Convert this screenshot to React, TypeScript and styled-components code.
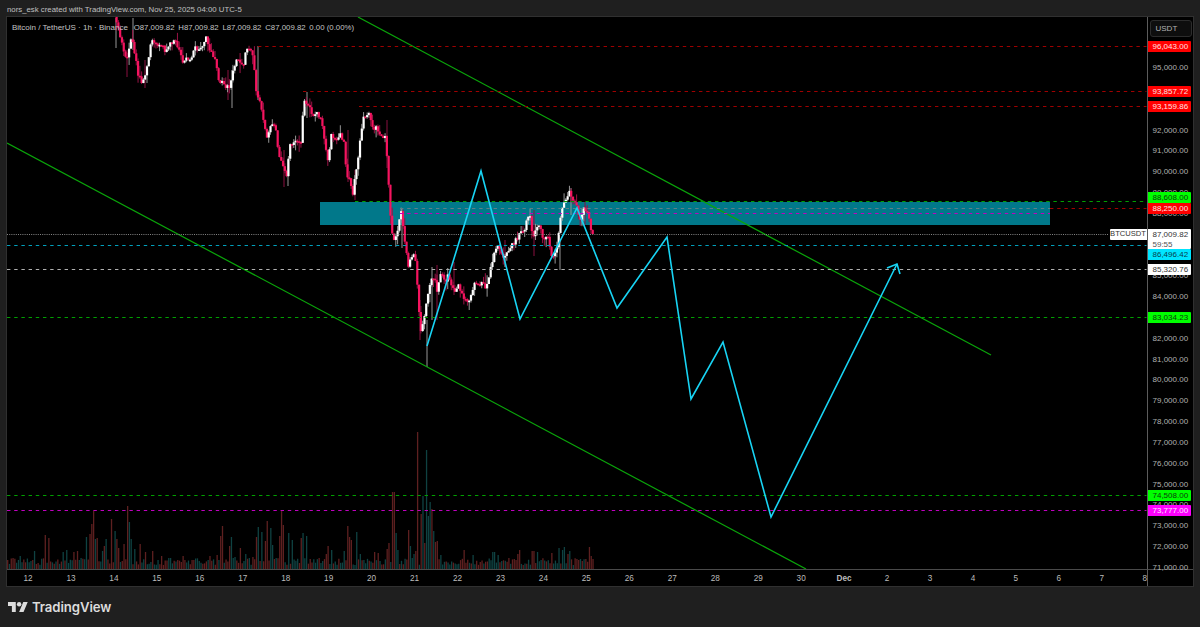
import React from 'react';
import styled, { createGlobalStyle } from 'styled-components';

const GlobalStyle = createGlobalStyle`
  html, body {
    margin: 0;
    padding: 0;
    background: #1f1f1f;
  }
`;

const FONT = `'Liberation Sans', Arial, sans-serif`;

const Page = styled.div`
  width: 1200px;
  height: 627px;
  overflow: hidden;
  box-sizing: border-box;
  padding: 0 6px;
  display: flex;
  flex-direction: column;
  font-family: ${FONT};
`;

const Caption = styled.div`
  height: 16px;
  line-height: 19px;
  padding-left: 1px;
  font-size: 7.8px;
  color: #c0c0c0;
  white-space: nowrap;
`;

const Frame = styled.div`
  height: 571px;
  box-sizing: border-box;
  border: 1px solid #303030;
  background: #000;
  display: grid;
  grid-template-columns: 1139.5px 1fr;
  grid-template-rows: 552px 1fr;
  overflow: hidden;
`;

const Plot = styled.div`
  position: relative;
  overflow: hidden;
`;

const PlotSvg = styled.svg`
  display: block;
  width: 100%;
  height: 100%;
`;

const Legend = styled.div`
  position: absolute;
  top: 5px;
  left: 5px;
  display: flex;
  gap: 3.8px;
  font-size: 7.8px;
  line-height: 11px;
  color: #c4c4c4;
  white-space: nowrap;
`;

const LegendTitle = styled.span`
  font-size: 8px;
  margin-right: 2px;
`;

const PriceAxis = styled.div`
  position: relative;
  border-left: 1px solid #5c5c5c;
`;

const CurrencyButton = styled.div`
  position: absolute;
  top: 3px;
  left: 2px;
  width: 42px;
  height: 17px;
  box-sizing: border-box;
  border: 1px solid #2c2c2c;
  border-radius: 3px;
  background: #0e0e0e;
  padding-left: 5px;
  font-size: 8px;
  line-height: 15px;
  color: #b4b4b4;
`;

const Tick = styled.div`
  position: absolute;
  left: 5px;
  font-size: 8px;
  line-height: 10px;
  color: #b0b0b0;
  transform: translateY(-50%);
`;

const PriceTag = styled.div<{ $bg: string; $fg: string }>`
  position: absolute;
  left: 0;
  width: 43px;
  height: 11px;
  box-sizing: border-box;
  padding-left: 5px;
  border-radius: 0 1px 1px 0;
  background: ${p => p.$bg};
  color: ${p => p.$fg};
  font-size: 8px;
  line-height: 11px;
`;

const LastPrice = styled(PriceTag)`
  height: 20px;
  line-height: 10px;
  padding-top: 0.5px;
`;

const Countdown = styled.div`
  color: #555;
`;

const SymbolTag = styled.div`
  position: absolute;
  top: 0;
  right: 100%;
  width: 37px;
  height: 10.5px;
  margin-right: 1px;
  border-radius: 1px 0 0 1px;
  background: #fff;
  color: #333;
  font-size: 7.6px;
  line-height: 10.5px;
  text-align: center;
`;

const TimeAxis = styled.div`
  grid-column: 1;
  grid-row: 2;
  border-top: 1px solid #4a4a4a;
  display: grid;
  grid-template-columns: repeat(27, 42.96px);
  margin-left: -0.5px;
  position: relative;
  z-index: 1;
`;

const TimeLabel = styled.div<{ $month?: boolean }>`
  text-align: center;
  font-size: 8.2px;
  line-height: 17px;
  font-weight: ${p => (p.$month ? 700 : 400)};
  color: #bcbcbc;
`;

const AxisCorner = styled.div`
  grid-column: 2;
  grid-row: 2;
  border-top: 1px solid #4a4a4a;
  border-left: 1px solid #5c5c5c;
`;

const Footer = styled.div`
  flex: 1;
  display: flex;
  align-items: center;
  gap: 4px;
  padding: 0 0 0 2px;
`;

const LogoMark = styled.svg`
  width: 20px;
  height: 10px;
  fill: #dcdcdc;
`;

const LogoText = styled.span`
  font-family: Inter, ${FONT};
  font-size: 13.2px;
  font-weight: 600;
  letter-spacing: -0.1px;
  color: #dcdcdc;
`;

const STEP = 1.79;

const rng = (seed: number) => {
  let s = seed;
  return () => {
    s = (s * 16807) % 2147483647;
    return s / 2147483647;
  };
};

// candle midline, traced from the chart (page coords)
const PATH: [number, number][] = [
  [113, 5], [118, 20], [123, 40], [127, 58], [130, 55], [133, 35], [136, 50], [140, 75], [143, 82], [147, 75], [152, 52], [153, 38],
  [158, 43], [163, 45], [168, 53], [172, 42], [178, 43], [182, 55], [185, 63], [188, 55], [193, 62], [196, 48], [203, 48], [208, 35],
  [212, 52], [217, 58], [220, 78], [228, 87], [232, 85], [238, 58], [241, 62], [245, 65], [248, 48], [255, 55], [258, 92], [263, 108],
  [268, 137], [272, 127], [277, 125], [280, 153], [286, 168], [288, 178], [292, 145], [297, 140], [303, 143], [305, 108], [307, 100],
  [310, 105], [316, 118], [318, 112], [323, 118], [327, 145], [330, 162], [333, 135], [338, 143], [342, 135], [346, 143], [348, 173],
  [352, 182], [355, 197], [357, 175], [360, 160], [362, 140], [365, 118], [368, 120], [371, 110], [375, 130], [378, 128], [383, 135],
  [387, 137], [390, 173], [392, 215], [395, 245], [400, 228], [403, 210], [407, 243], [410, 267], [415, 252], [418, 265], [420, 298],
  [422, 332], [425, 323], [430, 295], [433, 278], [437, 278], [438, 295], [443, 272], [447, 283], [450, 273], [453, 285], [458, 292],
  [460, 283], [467, 302], [473, 297], [477, 283], [483, 283], [488, 288], [491, 275], [495, 257], [499, 244], [505, 260], [512, 247],
  [520, 237], [527, 227], [531, 213], [535, 238], [540, 223], [545, 238], [550, 237], [553, 257], [558, 250], [563, 213], [567, 200],
  [571, 191], [577, 203], [582, 220], [585, 207], [590, 213], [593, 234],
];

const midY = (x: number) => {
  for (let i = 1; i < PATH.length; i++) {
    if (x <= PATH[i][0]) {
      const [x0, y0] = PATH[i - 1];
      const [x1, y1] = PATH[i];
      return y0 + ((y1 - y0) * (x - x0)) / (x1 - x0);
    }
  }
  return PATH[PATH.length - 1][1];
};

const buildCandles = () => {
  const rand = rng(4711);
  const out: { x: number; open: number; close: number; hi: number; lo: number }[] = [];
  let open = midY(113);
  for (let x = 113; x < 593.5; x += STEP) {
    const close = x + STEP >= 593 ? 234 : midY(x + STEP) + (rand() - 0.5) * 5;
    const hi = Math.min(open, close) - rand() * rand() * 11;
    const lo = Math.max(open, close) + rand() * rand() * 11;
    out.push({ x, open, close, hi, lo });
    open = close;
  }
  return out;
};

const CANDLES = buildCandles();

// long wicks that stand out [x, top, bottom, up]
const WICKS: [number, number, number, boolean][] = [
  [116, 18, 48, true], [133, 18, 50, true], [127, 50, 77, false], [145, 60, 88, false], [232, 70, 108, true], [228, 70, 100, false],
  [258, 46, 100, true], [284, 150, 187, false], [288, 160, 186, true], [307, 92, 118, true], [348, 130, 182, false], [355, 170, 200, false],
  [387, 120, 168, false], [402, 208, 248, true], [420, 300, 340, false], [427, 320, 367, true], [432, 267, 320, true], [437, 265, 320, false],
  [505, 240, 267, false], [534, 210, 256, false], [560, 240, 270, true], [571, 188, 215, true], [585, 202, 225, false], [454, 262, 295, false],
];

// [x, height, up] picked off the chart, the rest of the pane is low noise
const VOLUME_PEAKS: [number, number, boolean][] = [
  [13, 11, false], [21, 13, true], [35, 18, true], [46, 34, false], [48, 31, false], [63, 17, true], [67, 19, true], [74, 17, false], [78, 18, false],
  [87, 32, true], [90, 35, false], [92, 45, false], [94, 58, false], [96, 30, true], [98, 31, false], [102, 18, true], [104, 23, false], [107, 30, true],
  [112, 50, false], [115, 38, true], [117, 30, false], [119, 21, false], [124, 25, false], [127, 63, false], [129, 47, true], [132, 30, true], [134, 20, true],
  [141, 25, false], [146, 17, false], [153, 18, false], [162, 13, false], [170, 11, true], [183, 13, false], [193, 9, false], [210, 13, false], [217, 14, false],
  [220, 33, false], [223, 43, false], [229, 23, false], [232, 32, true], [235, 12, true], [241, 21, false], [246, 15, true], [253, 12, false],
  [257, 32, false], [258, 42, true], [262, 37, true], [265, 28, false], [268, 48, false], [270, 41, true], [272, 24, true], [280, 33, false], [282, 58, false],
  [284, 44, false], [289, 36, true], [292, 29, true], [302, 31, false], [303, 36, true], [306, 33, true], [307, 16, false], [320, 11, false], [327, 15, false],
  [328, 23, false], [332, 19, true], [345, 18, true], [347, 43, false], [349, 32, false], [350, 35, false], [352, 29, false], [357, 37, true], [361, 15, true],
  [374, 17, false], [379, 16, false], [387, 20, false], [388, 29, false], [389, 26, false], [392, 77, false], [394, 77, false], [395, 40, false], [397, 36, true],
  [398, 19, true], [409, 39, false], [411, 23, true], [414, 15, true], [416, 18, false], [418, 137, false], [421, 55, false], [423, 73, true], [425, 26, false],
  [427, 119, true], [429, 53, true], [430, 67, true], [432, 60, false], [434, 38, true], [436, 27, false], [438, 28, false], [440, 14, true], [464, 19, false],
  [473, 14, true], [493, 17, true], [495, 17, true], [498, 14, true], [517, 15, false], [520, 19, false], [532, 18, false], [534, 18, false], [538, 17, true],
  [551, 16, false], [559, 21, true], [562, 19, true], [565, 22, true], [568, 15, false], [570, 18, true], [577, 10, false], [590, 22, false], [592, 13, false],
];

const buildVolume = () => {
  const rand = rng(90210);
  const out: { x: number; h: number; up: boolean }[] = [];
  for (let x = 7.7; x < 593.5; x += STEP) {
    const peak = VOLUME_PEAKS.find(p => Math.abs(p[0] - x) <= STEP / 2);
    out.push(peak ? { x, h: peak[1], up: peak[2] } : { x, h: 4 + rand() * 7, up: rand() > 0.5 });
  }
  return out;
};

const VOLUME = buildVolume();

const DASH_LINES: { x1: number; x2?: number; y: number; color: string; dash?: string }[] = [
  { x1: 258, y: 46.5, color: '#a00000' },
  { x1: 303, y: 91.5, color: '#a00000' },
  { x1: 359, y: 106.5, color: '#a00000' },
  { x1: 355, y: 201.5, color: '#00a000' },
  { x1: 400, x2: 1050, y: 208.5, color: '#5f8088' },
  { x1: 1050, y: 208.5, color: '#a00000' },
  { x1: 400, x2: 1050, y: 213.5, color: '#c000c0' },
  { x1: 7, x2: 1109, y: 234.5, color: '#858585', dash: '1 1.2' },
  { x1: 7, y: 245.5, color: '#00a0bc' },
  { x1: 7, y: 269.5, color: '#b0b0b0' },
  { x1: 7, y: 317.5, color: '#00a000' },
  { x1: 7, y: 495.5, color: '#00a000' },
  { x1: 7, y: 510.5, color: '#c000c0' },
];

const FORECAST = '427,346 481,171 520,319 577,208 617,308 667,237 691,399 723,342 771,517 897,264';
const ARROW_HEAD = '887,268 897,264 900,274';

const priceY = (p: number) => 546 - (p - 72000) * 0.02082 - 16;

const TICKS = [95, 94, 92, 91, 90, 89, 88, 85, 84, 82, 81, 80, 79, 78, 77, 76, 75, 74, 73, 72, 71];

const TAGS: { label: string; top: number; bg: string; fg: string }[] = [
  { label: '96,043.00', top: 41, bg: '#ff0000', fg: '#ffe0e0' },
  { label: '93,857.72', top: 86, bg: '#ff0000', fg: '#ffe0e0' },
  { label: '93,159.86', top: 101, bg: '#ff0000', fg: '#ffe0e0' },
  { label: '88,608.00', top: 192, bg: '#00ff00', fg: '#0b3d0b' },
  { label: '88,250.00', top: 203, bg: '#ff0000', fg: '#ffe0e0' },
  { label: '86,496.42', top: 249, bg: '#00e5ff', fg: '#07404c' },
  { label: '85,320.76', top: 264, bg: '#ffffff', fg: '#333333' },
  { label: '83,034.23', top: 312, bg: '#00ff00', fg: '#0b3d0b' },
  { label: '74,508.00', top: 490, bg: '#00ff00', fg: '#0b3d0b' },
  { label: '73,777.00', top: 505, bg: '#ff00ff', fg: '#ffe6ff' },
];

const DAYS = ['12', '13', '14', '15', '16', '17', '18', '19', '20', '21', '22', '23', '24', '25', '26', '27', '28', '29', '30', 'Dec', '2', '3', '4', '5', '6', '7', '8'];

function Chart (): React.ReactElement {
  return (
    <PlotSvg viewBox='7 17 1139.5 552'>
      {VOLUME.map(v => (
        <line key={v.x} x1={v.x} x2={v.x} y1={569} y2={569 - v.h} stroke={v.up ? '#0f4242' : '#5e2020'} strokeWidth={1.3} />
      ))}
      <rect x={320} y={202} width={730} height={23} fill='#01788a' />
      {WICKS.map(([x, y1, y2, up]) => (
        <line key={`${x}-${y1}`} x1={x} x2={x} y1={y1} y2={y2} stroke={up ? '#969696' : '#8a1140'} strokeWidth={1} />
      ))}
      {CANDLES.map(c => {
        const up = c.close < c.open;
        return (
          <g key={c.x}>
            <line x1={c.x} x2={c.x} y1={c.hi} y2={c.lo} stroke={up ? '#969696' : '#9a1346'} strokeWidth={1} />
            <rect
              x={c.x - 1.1}
              y={Math.min(c.open, c.close)}
              width={2.2}
              height={Math.max(Math.abs(c.close - c.open), 1.6)}
              fill={up ? '#ffffff' : '#f5145f'}
            />
          </g>
        );
      })}
      <line x1={358} y1={17} x2={991} y2={355} stroke='#0aa50a' strokeWidth={1.2} />
      <line x1={7} y1={143} x2={806} y2={569} stroke='#0aa50a' strokeWidth={1.2} />
      {DASH_LINES.map(l => (
        <line
          key={`${l.x1}-${l.y}`}
          x1={l.x1}
          x2={l.x2 ?? 1146.5}
          y1={l.y}
          y2={l.y}
          stroke={l.color}
          strokeWidth={1.1}
          strokeDasharray={l.dash ?? '3.4 3.8'}
        />
      ))}
      <polyline points={FORECAST} fill='none' stroke='#18d4f4' strokeWidth={1.6} />
      <polyline points={ARROW_HEAD} fill='none' stroke='#18d4f4' strokeWidth={1.6} />
    </PlotSvg>
  );
}

export default function App (): React.ReactElement {
  return (
    <Page>
      <GlobalStyle />
      <Caption>nors_esk created with TradingView.com, Nov 25, 2025 04:00 UTC-5</Caption>
      <Frame>
        <Plot>
          <Chart />
          <Legend>
            <LegendTitle>Bitcoin / TetherUS · 1h · Binance</LegendTitle>
            <span>O87,009.82</span>
            <span>H87,009.82</span>
            <span>L87,009.82</span>
            <span>C87,009.82</span>
            <span>0.00 (0.00%)</span>
          </Legend>
        </Plot>
        <PriceAxis>
          <CurrencyButton>USDT</CurrencyButton>
          {TICKS.map(t => (
            <Tick key={t} style={{ top: priceY(t * 1000) }}>{t},000.00</Tick>
          ))}
          {TAGS.map(t => (
            <PriceTag key={t.label} $bg={t.bg} $fg={t.fg} style={{ top: t.top - 17 }}>{t.label}</PriceTag>
          ))}
          <LastPrice $bg='#ffffff' $fg='#333333' style={{ top: 212 }}>
            87,009.82
            <Countdown>59:55</Countdown>
            <SymbolTag>BTCUSDT</SymbolTag>
          </LastPrice>
        </PriceAxis>
        <TimeAxis>
          {DAYS.map(d => (
            <TimeLabel key={d} $month={d === 'Dec'}>{d}</TimeLabel>
          ))}
        </TimeAxis>
        <AxisCorner />
      </Frame>
      <Footer>
        <LogoMark viewBox='0 4 36 18'>
          <path d='M14 22H7V11H0V4h14v18zM28 22h-8l7.5-18h8L28 22z' />
          <circle cx='20' cy='8' r='4' />
        </LogoMark>
        <LogoText>TradingView</LogoText>
      </Footer>
    </Page>
  );
}
